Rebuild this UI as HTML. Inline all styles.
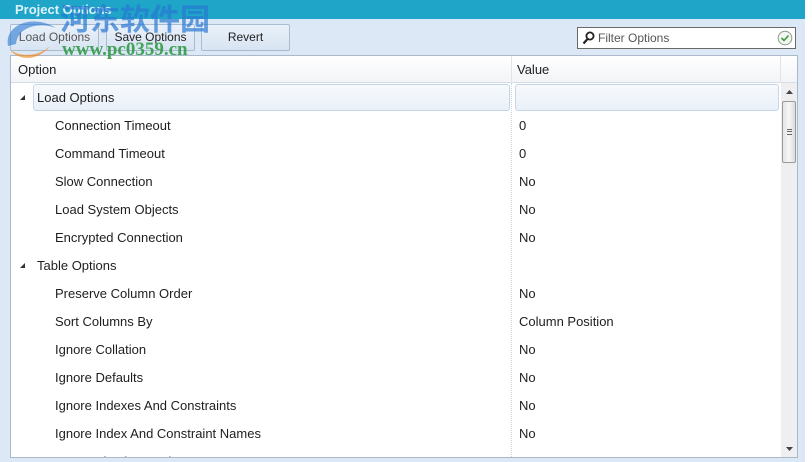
<!DOCTYPE html>
<html><head><meta charset="utf-8"><style>
*{margin:0;padding:0;box-sizing:border-box}
body{width:812px;height:462px;overflow:hidden;background:#fff;font-family:"Liberation Sans","Noto Sans CJK SC",sans-serif;font-size:13px;color:#1e1e1e;position:relative}
#win{position:absolute;left:0;top:0;width:805px;height:462px;background:#dce8f6}
#title{position:absolute;left:0;top:0;width:805px;height:19px;background:#1ea5c8;color:#dff2f9;font-weight:bold;font-size:13px;padding:2px 0 0 15px}
.btn{position:absolute;top:24px;height:27px;border:1px solid #a9bccf;background:linear-gradient(#e9f1fa,#d8e4f2);border-radius:2px;text-align:center;line-height:25px;font-size:12px;color:#222}
#filter{position:absolute;left:577px;top:27px;width:219px;height:22px;background:#fff;border:1px solid #6a6a6a;font-size:12px;color:#555;line-height:20px;padding-left:20px}
#grid{position:absolute;left:10px;top:55px;width:788px;height:403px;background:#fff;border:1px solid #a9b9c9;overflow:hidden}
#hdr{position:absolute;left:0;top:0;width:786px;height:27px;background:linear-gradient(#fff,#f2f4f7);border-bottom:1px solid #d7dde4}
.cell{position:absolute;white-space:nowrap}
.row{position:absolute;left:0;width:770px;height:28px;line-height:28px}
.row .o{position:absolute;left:44px}
.row .v{position:absolute;left:508px}
.row.g .o{left:26px}
.tri{position:absolute;left:8px;top:10px}
#vsep{position:absolute;left:500px;top:27px;width:0;height:380px;border-left:1px dotted #c8d6e6}
#sb{position:absolute;left:770px;top:27px;width:17px;height:376px;background:#efeff2}
#thumb{position:absolute;left:1px;top:18px;width:14px;height:62px;background:linear-gradient(90deg,#e4e4e4,#f6f6f6,#dcdcdc);border:1px solid #9a9a9a;border-radius:2px}
.wm{position:absolute;font-weight:bold;white-space:nowrap}
</style></head><body>
<div id="win">
<div id="title">Project Options</div>
<div class="btn" style="left:10px;width:89px;color:#555">Load Options</div>
<div class="btn" style="left:106px;width:89px">Save Options</div>
<div class="btn" style="left:201px;width:89px">Revert</div>
<div id="filter">Filter Options
<svg style="position:absolute;left:4px;top:3px" width="13" height="14" viewBox="0 0 13 14"><circle cx="8" cy="5" r="3.6" fill="none" stroke="#222" stroke-width="1.8"/><path d="M5.5 8 L1.5 12.5" stroke="#222" stroke-width="2.2"/></svg>
<svg style="position:absolute;right:2px;top:2px" width="16" height="16" viewBox="0 0 16 16"><circle cx="8" cy="8" r="6.8" fill="#f4f6f4" stroke="#8a9a8a"/><path d="M4.5 8 L7 10.5 L11.5 5.5" fill="none" stroke="#3a9a3a" stroke-width="1.6"/></svg>
</div>
<div id="grid">
<div id="hdr"><div class="cell" style="left:7px;top:6px">Option</div><div class="cell" style="left:506px;top:6px">Value</div>
<div style="position:absolute;left:500px;top:0;height:27px;border-left:1px solid #e1e5ea"></div>
<div style="position:absolute;left:769px;top:0;height:27px;border-left:1px solid #e1e5ea"></div></div>
<div id="vsep"></div>
<div style="position:absolute;left:22px;top:28px;width:477px;height:27px;border:1px solid #c7d6e8;border-radius:3px;background:linear-gradient(#f7fafd,#e9f0f8)"></div>
<div style="position:absolute;left:504px;top:28px;width:264px;height:27px;border:1px solid #c7d6e8;border-radius:3px;background:linear-gradient(#f7fafd,#e9f0f8)"></div>
<div class="row g" style="top:28px"><svg class="tri" width="7" height="7"><path d="M6 1 L6 6 L1 6Z" fill="#333"/></svg><span class="o">Load Options</span></div>
<div class="row" style="top:56px"><span class="o">Connection Timeout</span><span class="v">0</span></div>
<div class="row" style="top:84px"><span class="o">Command Timeout</span><span class="v">0</span></div>
<div class="row" style="top:112px"><span class="o">Slow Connection</span><span class="v">No</span></div>
<div class="row" style="top:140px"><span class="o">Load System Objects</span><span class="v">No</span></div>
<div class="row" style="top:168px"><span class="o">Encrypted Connection</span><span class="v">No</span></div>
<div class="row g" style="top:196px"><svg class="tri" width="7" height="7"><path d="M6 1 L6 6 L1 6Z" fill="#333"/></svg><span class="o">Table Options</span></div>
<div class="row" style="top:224px"><span class="o">Preserve Column Order</span><span class="v">No</span></div>
<div class="row" style="top:252px"><span class="o">Sort Columns By</span><span class="v">Column Position</span></div>
<div class="row" style="top:280px"><span class="o">Ignore Collation</span><span class="v">No</span></div>
<div class="row" style="top:308px"><span class="o">Ignore Defaults</span><span class="v">No</span></div>
<div class="row" style="top:336px"><span class="o">Ignore Indexes And Constraints</span><span class="v">No</span></div>
<div class="row" style="top:364px"><span class="o">Ignore Index And Constraint Names</span><span class="v">No</span></div>
<div class="row" style="top:392px"><span class="o">Ignore Identity Seeds</span><span class="v">No</span></div>
<div id="sb"><svg style="position:absolute;left:5px;top:7px" width="7" height="4"><path d="M0 4 L3.5 0 L7 4Z" fill="#444"/></svg>
<div id="thumb"><div style="position:absolute;left:4px;top:27px;width:5px;height:6px;border-top:1px solid #666;border-bottom:1px solid #666"></div><div style="position:absolute;left:4px;top:29px;width:5px;border-top:1px solid #666"></div></div>
<svg style="position:absolute;left:5px;top:364px" width="7" height="4"><path d="M0 0 L7 0 L3.5 4Z" fill="#444"/></svg></div>
</div>
<div class="wm" style="left:60px;top:4px;font-size:30px;line-height:34px;color:rgba(40,120,210,0.7)">河东软件园</div>
<div class="wm" style="left:62px;top:39px;font-size:19px;font-family:'Liberation Serif',serif;color:rgba(40,150,60,0.85)">www.pc0359.cn</div>
<svg class="wm" style="left:2px;top:12px" width="58" height="50"><path d="M6 34 C2 12 32 2 54 16 C38 10 16 14 14 32Z" fill="rgba(40,120,210,0.6)"/><path d="M8 38 C18 50 38 48 48 34 C38 44 20 46 8 38Z" fill="rgba(240,140,40,0.7)"/></svg>
</div>
</body></html>
